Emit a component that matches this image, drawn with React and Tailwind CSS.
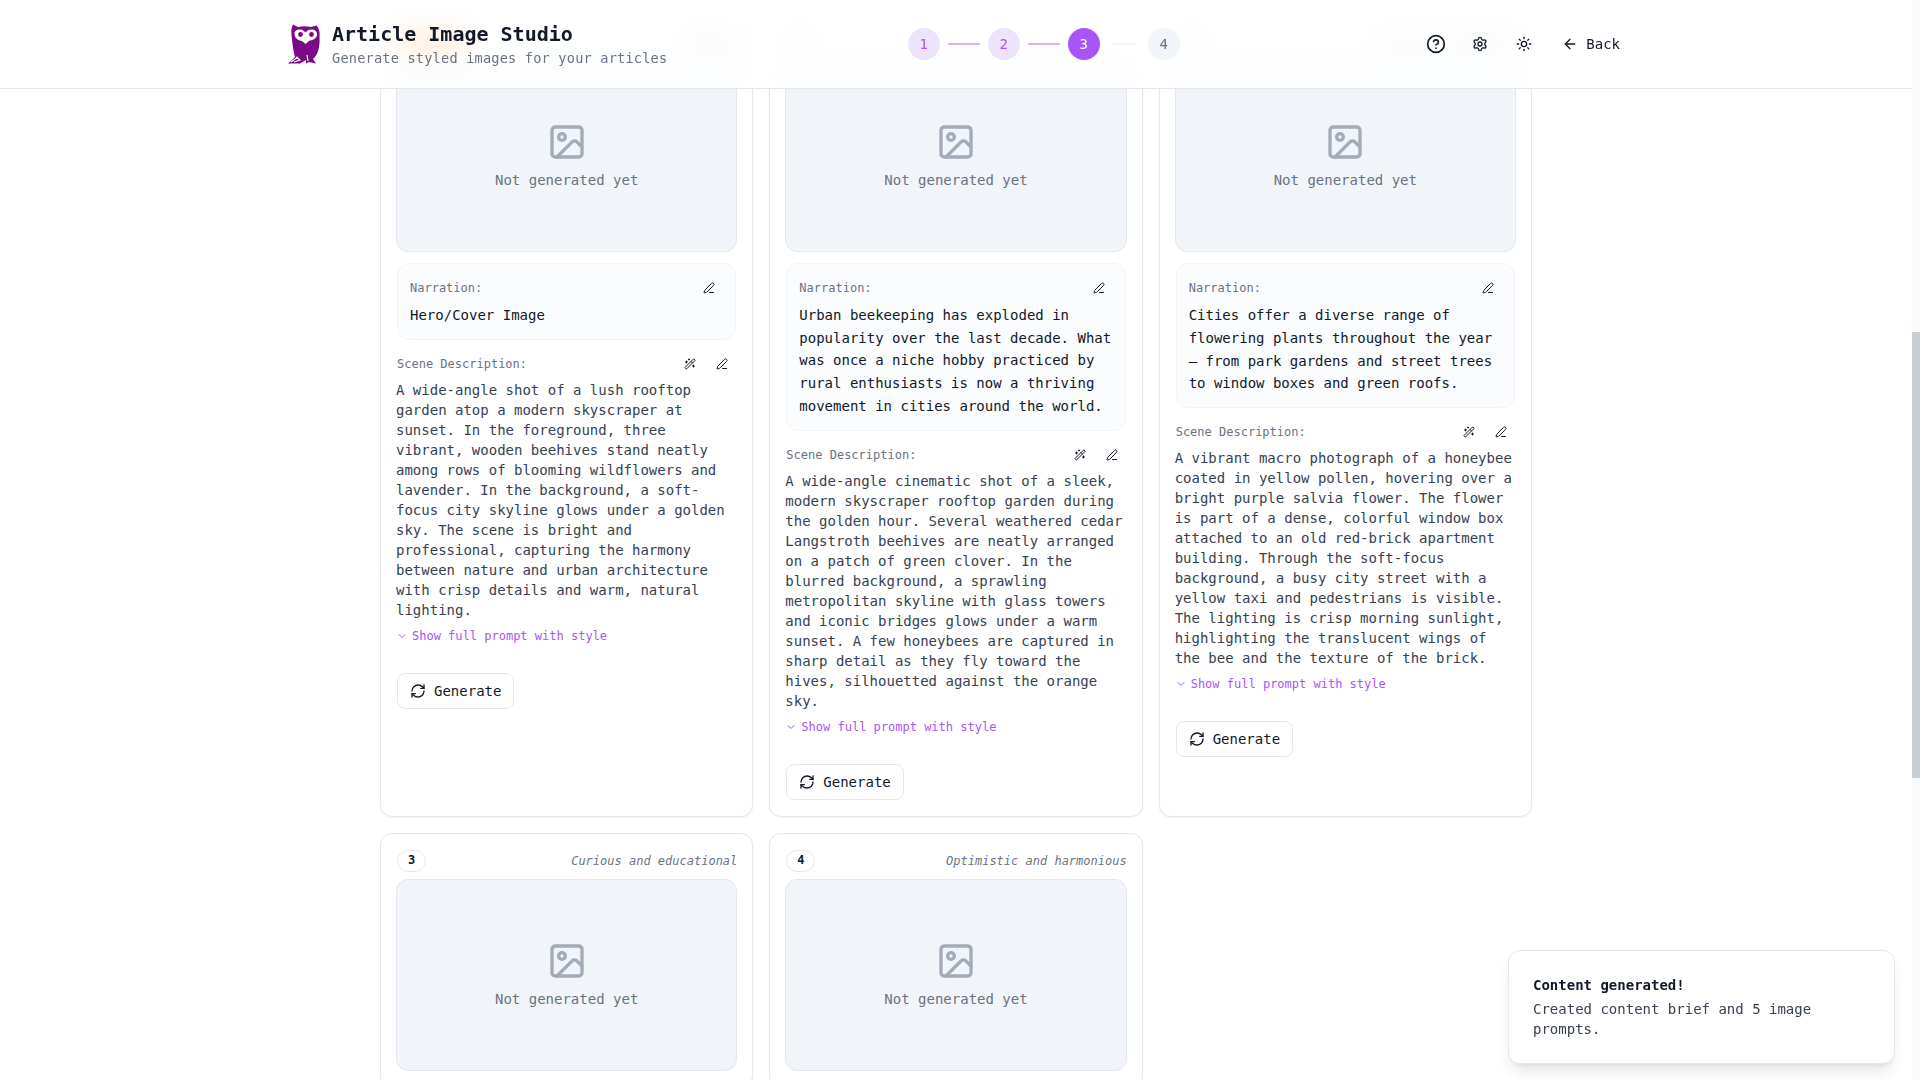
// Article Image Studio, step 3: image prompt cards
import { useLayoutEffect, useRef } from 'react'
import {
  ArrowLeft,
  ChevronDown,
  CircleHelp,
  Image as ImageIcon,
  PenLine,
  RefreshCw,
  Settings,
  Sun,
  WandSparkles,
} from 'lucide-react'

const cards = [
  {
    badge: 'hero',
    mood: 'Vibrant',
    narration: 'Hero/Cover Image',
    scene:
      'A wide-angle shot of a lush rooftop garden atop a modern skyscraper at sunset. In the foreground, three vibrant, wooden beehives stand neatly among rows of blooming wildflowers and lavender. In the background, a soft-focus city skyline glows under a golden sky. The scene is bright and professional, capturing the harmony between nature and urban architecture with crisp details and warm, natural lighting.',
  },
  {
    badge: '1',
    narration:
      'Urban beekeeping has exploded in popularity over the last decade. What was once a niche hobby practiced by rural enthusiasts is now a thriving movement in cities around the world.',
    scene:
      'A wide-angle cinematic shot of a sleek, modern skyscraper rooftop garden during the golden hour. Several weathered cedar Langstroth beehives are neatly arranged on a patch of green clover. In the blurred background, a sprawling metropolitan skyline with glass towers and iconic bridges glows under a warm sunset. A few honeybees are captured in sharp detail as they fly toward the hives, silhouetted against the orange sky.',
  },
  {
    badge: '2',
    mood: 'Vivid and colourful',
    narration:
      'Cities offer a diverse range of flowering plants throughout the year — from park gardens and street trees to window boxes and green roofs.',
    scene:
      'A vibrant macro photograph of a honeybee coated in yellow pollen, hovering over a bright purple salvia flower. The flower is part of a dense, colorful window box attached to an old red-brick apartment building. Through the soft-focus background, a busy city street with a yellow taxi and pedestrians is visible. The lighting is crisp morning sunlight, highlighting the translucent wings of the bee and the texture of the brick.',
  },
  { badge: '3', mood: 'Curious and educational' },
  { badge: '4', mood: 'Optimistic and harmonious' },
]

const OwlLogo = () => (
  <svg viewBox="0 0 32 40" className="w-8 h-10 shrink-0">
    <path
      fill="#7b0a86"
      d="M5 0.5 L10 3 C14 2 19 2 23 3 L28.5 1.5 C31 4 32 8 31.5 12 C32 20 31 28 27 33 L25 35 L28 39.5 L21 38 L18 39.5 L18 36 L12 39.5 L0 39.5 C3 37 5 35 7 33 C5 26 4 16 3.5 11 C3 7 3.5 3 5 0.5 Z"
    />
    <path
      fill="#fff"
      d="M6.5 9.5 C6.5 6 10 5 13 5.5 C15 6 16.5 7.5 17.5 8.5 C18.5 7 20.5 5.5 23.5 5.5 C27.5 5.5 29.5 8 29 11 C28.5 15 24 16 21 17 L17.5 20 L14 17 C10 16.5 6.5 14 6.5 9.5 Z"
    />
    <circle cx="12.5" cy="10.5" r="2.4" fill="#7b0a86" />
    <circle cx="23.5" cy="10.5" r="2.4" fill="#7b0a86" />
    <path fill="none" stroke="#fff" strokeWidth="1.2" d="M3 38 L10 33 M6 38 L12 36 L8 33 M20 37 L19 31" />
  </svg>
)

const steps = [
  { n: 1, cls: 'bg-[#ede4fb] text-[#a855f7]', line: 'bg-[#d7b4ee] w-8 mx-2' },
  { n: 2, cls: 'bg-[#ede4fb] text-[#a855f7]', line: 'bg-[#d7b4ee] w-8 mx-2' },
  { n: 3, cls: 'bg-[#a855f7] text-white', line: 'bg-[#f1f5f9] w-6 mx-3' },
  { n: 4, cls: 'bg-[#f1f5f9] text-[#6b7280]' },
]

const Header = () => (
  <header className="sticky top-0 z-20 h-[89px] border-b border-[#e5e7eb] bg-white/75 backdrop-blur-md">
    <div className="mx-auto flex h-full max-w-[1400px] items-center justify-between px-8">
      <div className="flex items-center gap-3">
        <OwlLogo />
        <div>
          <div className="text-[20px] leading-7 font-semibold text-[#111827]">Article Image Studio</div>
          <div className="text-[13.6px] leading-5 tracking-[0.2px] text-[#6b7280]">
            Generate styled images for your articles
          </div>
        </div>
      </div>

      {/* steps */}
      <div className="ml-1 flex items-center">
        {steps.map(s => (
          <div key={s.n} className="flex items-center">
            <div className={`flex h-8 w-8 items-center justify-center rounded-full text-sm ${s.cls}`}>{s.n}</div>
            {s.line && <div className={`h-0.5 ${s.line}`} />}
          </div>
        ))}
      </div>

      <div className="mr-1 flex items-center gap-1 text-[#111827]">
        <button className="flex h-10 w-10 items-center justify-center">
          <CircleHelp className="h-5 w-5" />
        </button>
        <button className="flex h-10 w-10 items-center justify-center">
          <Settings className="h-4 w-4" />
        </button>
        <button className="flex h-10 w-10 items-center justify-center">
          <Sun className="h-4 w-4" />
        </button>
        <button className="ml-[14px] flex h-10 items-center gap-2 text-sm">
          <ArrowLeft className="h-4 w-4" />
          Back
        </button>
      </div>
    </div>
  </header>
)

const IconBtn = ({ children }) => (
  <button className="flex h-6 w-6 items-center justify-center text-[#111827]">{children}</button>
)

const Placeholder = () => (
  <div className="flex aspect-video flex-col items-center justify-center gap-2 rounded-xl border border-[#e2e8f0] bg-[#f1f5f9]">
    <ImageIcon className="h-10 w-10 text-[#a3abb8]" />
    <span className="text-sm leading-5 text-[#6b7280]">Not generated yet</span>
  </div>
)

const PromptCard = ({ card }) => (
  <div className="rounded-xl border border-[#e5e7eb] bg-white px-[15px] pt-4 pb-4 shadow-xs">
    <div className="mb-[7px] flex h-[22px] items-center justify-between">
      {card.badge === 'hero' ? (
        <span className="ml-px h-[22px] w-[70px] rounded-full bg-orange-300" />
      ) : (
        <span className="ml-px flex h-[22px] w-[29px] items-center justify-center rounded-full border border-[#e5e7eb] bg-white pb-[2px] text-xs font-semibold text-[#111827]">
          {card.badge}
        </span>
      )}
      {card.mood && <span className="text-xs text-[#6b7280] italic">{card.mood}</span>}
    </div>

    <Placeholder />

    {card.scene && (
      <>
        <div className="mx-px mt-[11px] rounded-xl border border-[#f1f5f9] bg-[#fbfcfe] p-3">
          <div className="mb-1 flex h-6 items-center justify-between">
            <span className="text-xs font-medium text-[#6b7280]">Narration:</span>
            <div className="mr-0.5">
              <IconBtn>
                <PenLine className="h-3 w-3" />
              </IconBtn>
            </div>
          </div>
          <p className="text-sm leading-[22.75px] text-[#111827]">{card.narration}</p>
        </div>

        <div className="mt-3 mb-1 flex h-6 items-center justify-between">
          <span className="ml-px text-xs font-medium text-[#6b7280]">Scene Description:</span>
          <div className="mr-[3px] flex items-center gap-2">
            <IconBtn>
              <WandSparkles className="h-3 w-3" />
            </IconBtn>
            <IconBtn>
              <PenLine className="h-3 w-3" />
            </IconBtn>
          </div>
        </div>
        <p className="text-sm leading-5 text-[#374151]">{card.scene}</p>

        <button className="mt-2 flex h-4 items-center gap-1 text-xs text-[#a855f7]">
          <ChevronDown className="h-3 w-3" />
          Show full prompt with style
        </button>

        <button className="mt-[29px] ml-px flex h-9 items-center gap-2 rounded-lg border border-[#e5e7eb] bg-white px-3 text-sm font-medium text-[#111827]">
          <RefreshCw className="h-4 w-4" />
          Generate
        </button>
      </>
    )}
  </div>
)

export default function App() {
  const scroller = useRef(null)

  // the picture shows the page scrolled down to the prompt cards
  useLayoutEffect(() => {
    scroller.current.scrollTop = 804
  }, [])

  return (
    <div className="flex h-screen bg-white font-['DejaVu_Sans_Mono',monospace]">
      <div ref={scroller} className="min-w-0 flex-1 overflow-y-auto [scrollbar-width:none]">
        <Header />
        <main className="mx-auto max-w-6xl pt-[729px] pb-[724px]">
          <div className="grid grid-cols-3 items-stretch gap-4">
            {cards.map(c => (
              <PromptCard key={c.badge} card={c} />
            ))}
          </div>
        </main>
      </div>

      {/* scrollbar: headless chrome hides the native one */}
      <div className="w-2 shrink-0 bg-[#f8fafc] pt-[332px]">
        <div className="h-[446px] bg-[#c9ced6]" />
      </div>

      {/* toast */}
      <div className="fixed right-[25px] bottom-4 z-30 w-[387px] rounded-xl border border-[#e5e7eb] bg-white p-6 shadow-lg">
        <div className="mb-1 text-sm leading-5 font-semibold text-[#111827]">Content generated!</div>
        <div className="text-sm leading-5 text-[#374151]">Created content brief and 5 image prompts.</div>
      </div>
    </div>
  )
}
